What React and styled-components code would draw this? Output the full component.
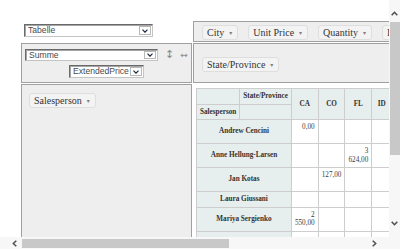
import React from 'react';
import styled, { createGlobalStyle } from 'styled-components';

const GlobalStyle = createGlobalStyle`
  html, body {
    margin: 0;
    padding: 0;
    background: #fff;
    overflow: hidden;
  }
  * {
    box-sizing: border-box;
  }
`;

const Frame = styled.div`
  display: grid;
  grid-template-columns: 389px 11px;
  grid-template-rows: 237px 12px;
  width: 400px;
  height: 249px;
  background: #fff;
`;

const Viewport = styled.div`
  overflow: hidden;
  padding: 21px 0 0 21px;
  font-family: 'Liberation Serif', 'Times New Roman', serif;
  color: #333;
`;

const PivotUi = styled.div`
  display: grid;
  grid-template-columns: 171px max-content;
  grid-template-rows: 21px 40px auto;
  gap: 1px;
`;

const RendererCell = styled.div`
  padding: 3px;
`;

const SelectBox = styled.div`
  display: flex;
  align-items: stretch;
  width: ${({ $width }) => $width}px;
  height: ${({ $height }) => $height || 13}px;
  border: 1px solid;
  border-color: #6a6a6a #c4c4c4 #c4c4c4 #6a6a6a;
  box-shadow: inset 1px 1px 0 #a5a5a5;
  background: #fff;
  font-family: 'Liberation Sans', Arial, sans-serif;
  font-size: 8.6px;
  color: #4a4a4a;
`;

const SelectText = styled.span`
  flex: 1;
  padding: 0 0 0 3px;
  line-height: 11px;
  white-space: nowrap;
  overflow: hidden;
`;

const SelectArrow = styled.span`
  flex: none;
  width: 12px;
  margin: 1px 1px 1px 0;
  border: 1px solid #b8b8b8;
  background: #fff;
  display: flex;
  align-items: center;
  justify-content: center;
`;

const ValsCell = styled.div`
  display: flex;
  flex-direction: column;
  background: #eee;
  border: 1px solid #a0a0a0;
  padding: 5px 0 0 3px;
`;

const AggRow = styled.div`
  display: flex;
  align-items: center;
  height: 12px;
`;

const OrderIcon = styled.span`
  margin-left: ${({ $ml }) => $ml}px;
  font-family: 'DejaVu Sans', sans-serif;
  font-size: ${({ $size }) => $size}px;
  line-height: 12px;
  color: #8a8a8a;
`;

const ValAttr = styled.div`
  align-self: center;
  margin: 4px 0 0 -3px;
`;

const AxisContainer = styled.div`
  display: flex;
  align-items: flex-start;
  background: #eee;
  border: 1px solid #a0a0a0;
  padding: ${({ $pt }) => $pt}px 0 0 ${({ $pl }) => $pl}px;
`;

const AttrPill = styled.span`
  display: inline-flex;
  align-items: center;
  flex: none;
  margin-right: 10px;
  padding: 1px 5px 1px 4px;
  background: #f3f3f3;
  border: 1px solid #dedede;
  border-radius: 3px;
  font-size: 10px;
  line-height: 11px;
  white-space: nowrap;
  color: #333;
`;

const Triangle = styled.span`
  margin-left: 5px;
  font-family: 'DejaVu Sans', sans-serif;
  font-size: 6px;
  color: grey;
`;

const RendererArea = styled.div`
  padding: 4px 0 0 3px;
`;

const PivotTable = styled.table`
  border-collapse: collapse;
  font-family: 'Liberation Serif', 'Times New Roman', serif;
  font-size: 7.2px;
  line-height: 8.5px;
`;

const Th = styled.th`
  background: #e6eeee;
  border: 1px solid #cdcdcd;
  padding: 3px;
  font-weight: bold;
  color: #333;
  text-align: ${({ $align }) => $align || 'center'};
  vertical-align: middle;
  white-space: nowrap;
  width: ${({ $w }) => ($w ? `${$w}px` : 'auto')};
`;

const Td = styled.td`
  background: #fff;
  border: 1px solid #cdcdcd;
  padding: 3px;
  color: #3d3d3d;
  text-align: right;
  vertical-align: top;
  width: ${({ $w }) => $w}px;
  font-weight: ${({ $total }) => ($total ? 'bold' : 'normal')};
  white-space: ${({ $total }) => ($total ? 'nowrap' : 'normal')};
`;

const ScrollbarV = styled.div`
  display: flex;
  flex-direction: column;
  background: #f7f7f7;
`;

const ScrollbarH = styled.div`
  display: flex;
  align-items: center;
  background: #f7f7f7;
`;

const ScrollButton = styled.div`
  flex: none;
  display: flex;
  align-items: center;
  justify-content: center;
  width: ${({ $w }) => $w};
  height: ${({ $h }) => $h};
  padding: ${({ $pad }) => $pad};
`;

const Thumb = styled.div`
  flex: none;
  width: ${({ $w }) => $w};
  height: ${({ $h }) => $h};
  margin: ${({ $m }) => $m || 0};
  background: #c8c8c8;
`;

const Track = styled.div`
  flex: 1;
`;

const Corner = styled.div`
  background: #f7f7f7;
`;

const Chevron = ({ dir }) => {
  const vertical = dir === 'up' || dir === 'down';
  const points = {
    up: '0.7,4.3 3.5,1.3 6.3,4.3',
    down: '0.7,0.7 3.5,3.7 6.3,0.7',
    left: '4.3,0.7 1.3,3.5 4.3,6.3',
    right: '0.7,0.7 3.7,3.5 0.7,6.3',
  }[dir];
  return (
    <svg
      width={vertical ? 7 : 5}
      height={vertical ? 5 : 7}
      viewBox={vertical ? '0 0 7 5' : '0 0 5 7'}
    >
      <polyline points={points} fill="none" stroke="#4d4d4d" strokeWidth="1.5" />
    </svg>
  );
};

const Select = ({ label, width, height }) => (
  <SelectBox $width={width} $height={height}>
    <SelectText>{label}</SelectText>
    <SelectArrow>
      <svg width="6" height="4" viewBox="0 0 6 4">
        <polyline points="0.5,0.6 3,3.2 5.5,0.6" fill="none" stroke="#1f2a44" strokeWidth="1.2" />
      </svg>
    </SelectArrow>
  </SelectBox>
);

const Attr = ({ name }) => (
  <AttrPill>
    {name}
    <Triangle>▾</Triangle>
  </AttrPill>
);

const unusedAttrs = ['City', 'Unit Price', 'Quantity', 'Invoice Date', 'Product Name', 'Shipper'];

const states = ['CA', 'CO', 'FL', 'ID', 'IL', 'MA', 'NV', 'NY', 'OR', 'TN', 'TX', 'UT', 'WA', 'WI'];

const rows = [
  { name: 'Andrew Cencini', values: { CA: '0,00', IL: '1 930,00' }, total: '1 930,00' },
  { name: 'Anne Hellung-Larsen', values: { FL: '3 624,00' }, total: '3 624,00' },
  { name: 'Jan Kotas', values: { CO: '127,00', NY: '2 870,00' }, total: '2 997,00' },
  { name: 'Laura Giussani', values: { WI: '230,00' }, total: '230,00' },
  { name: 'Mariya Sergienko', values: { CA: '2 550,00' }, total: '2 550,00' },
  { name: 'Michael Neipper', values: { TX: '1 560,00' }, total: '1 560,00' },
  { name: 'Nancy Freehafer', values: { WA: '4 280,00' }, total: '4 280,00' },
  { name: 'Robert Zare', values: { UT: '920,00' }, total: '920,00' },
];

const App = () => (
  <>
    <GlobalStyle />
    <Frame>
      <Viewport>
        <PivotUi>
          <RendererCell>
            <Select label="Tabelle" width={129} />
          </RendererCell>

          <AxisContainer $pt={3} $pl={8}>
            {unusedAttrs.map((name) => (
              <Attr key={name} name={name} />
            ))}
          </AxisContainer>

          <ValsCell>
            <AggRow>
              <Select label="Summe" width={133} height={12} />
              <OrderIcon $ml={7} $size={11}>↕</OrderIcon>
              <OrderIcon $ml={6} $size={9}>↔</OrderIcon>
            </AggRow>
            <ValAttr>
              <Select label="ExtendedPrice" width={75} />
            </ValAttr>
          </ValsCell>

          <AxisContainer $pt={13} $pl={8}>
            <Attr name="State/Province" />
          </AxisContainer>

          <AxisContainer $pt={8} $pl={7}>
            <Attr name="Salesperson" />
          </AxisContainer>

          <RendererArea>
            <PivotTable>
              <thead>
                <tr>
                  <Th />
                  <Th>State/Province</Th>
                  {states.map((s) => (
                    <Th key={s} rowSpan={2} $w={20}>
                      {s}
                    </Th>
                  ))}
                  <Th rowSpan={2}>Totals</Th>
                </tr>
                <tr>
                  <Th $align="left">Salesperson</Th>
                  <Th />
                </tr>
              </thead>
              <tbody>
                {rows.map((row) => (
                  <tr key={row.name}>
                    <Th colSpan={2}>{row.name}</Th>
                    {states.map((s) => (
                      <Td key={s} $w={20}>
                        {row.values[s] || ''}
                      </Td>
                    ))}
                    <Td $total>{row.total}</Td>
                  </tr>
                ))}
              </tbody>
            </PivotTable>
          </RendererArea>
        </PivotUi>
      </Viewport>

      <ScrollbarV>
        <ScrollButton $w="100%" $h="22px" $pad="5px 0 0 0">
          <Chevron dir="up" />
        </ScrollButton>
        <Thumb $w="10px" $h="133px" $m="0 0 0 1px" />
        <Track />
        <ScrollButton $w="100%" $h="22px" $pad="0 0 5px 0">
          <Chevron dir="down" />
        </ScrollButton>
      </ScrollbarV>

      <ScrollbarH>
        <ScrollButton $w="22px" $h="100%" $pad="0 0 0 7px">
          <Chevron dir="left" />
        </ScrollButton>
        <Thumb $w="207px" $h="9px" />
        <Track />
        <ScrollButton $w="22px" $h="100%" $pad="0 7px 0 0">
          <Chevron dir="right" />
        </ScrollButton>
      </ScrollbarH>

      <Corner />
    </Frame>
  </>
);

export default App;
